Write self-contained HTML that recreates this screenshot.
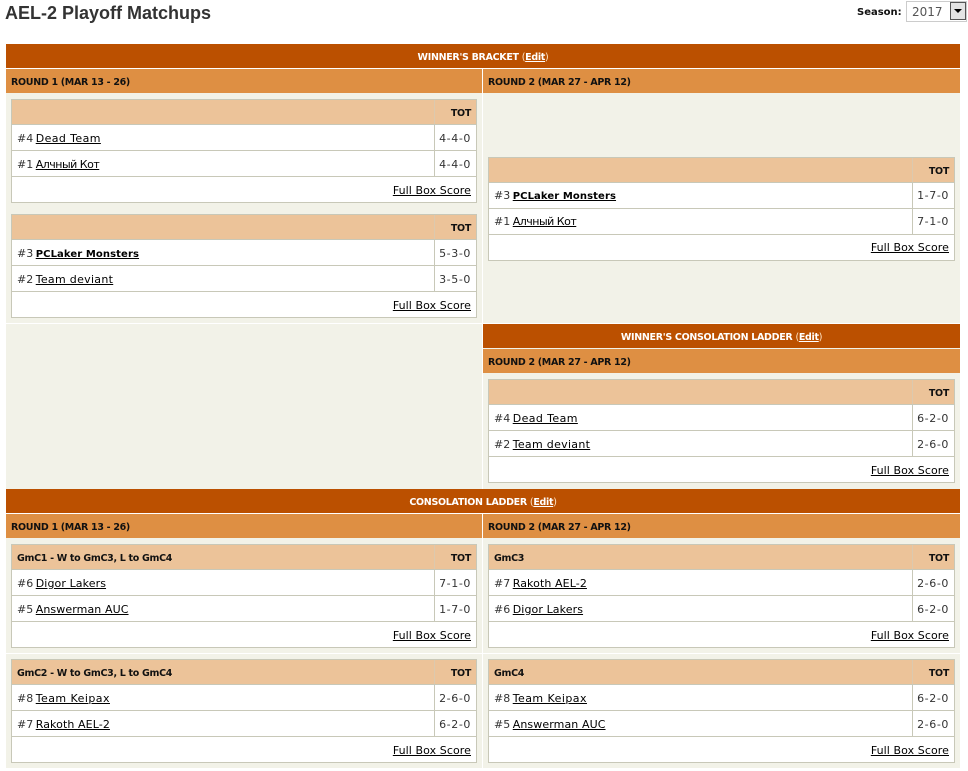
<!DOCTYPE html>
<html><head><meta charset="utf-8">
<style>
html,body{margin:0;padding:0;background:#fff;width:968px;height:771px;overflow:hidden}
body{position:relative;font:11px "DejaVu Sans","Liberation Sans",sans-serif;color:#222}
a{color:#000;text-decoration:underline}
h1{position:absolute;left:5px;top:2px;margin:0;font:bold 18px/22px "Liberation Sans",sans-serif;color:#333}
.s{position:absolute}
.bg{background:#f2f2e8}
.d{position:absolute;height:24px;background:#bb5000;color:#fff;font-weight:bold;font-size:9.5px;letter-spacing:-.3px;line-height:27px;text-align:center}
.d span{font-weight:normal;color:#ffe6c8}
.d a{color:#fff;font-weight:bold}
.o{position:absolute;height:24px;background:#de8f43;color:#111;font-weight:bold;font-size:9.5px;letter-spacing:-.3px;line-height:27px;box-sizing:border-box;padding-left:5px}
.b{position:absolute;width:466px;height:104px;background:#fff;box-sizing:border-box;border:1px solid #c8c8b8}
.w{width:467px}
.b div{position:absolute;left:0;right:0;box-sizing:border-box;white-space:nowrap}
.b .h{top:0;height:25px;background:#ecc399;font-weight:bold;font-size:9.5px;letter-spacing:-.3px;line-height:28px;padding-left:5px;color:#111;border-bottom:1px solid #c8c8b8}
.b .r{height:26px;line-height:28px;padding-left:5px;border-bottom:1px solid #c8c8b8;color:#333}
.b .r1{top:25px}.b .r2{top:51px}
.b .t{left:auto;right:0;top:0;width:42px;height:100%;text-align:right;padding-right:5px;border-left:1px solid #c8c8b8}
.b .r .t{letter-spacing:.6px}
.b .h .t{line-height:28px;border-left:1px solid #dcc9ae}
.b .f{top:77px;height:25px;line-height:28px;text-align:right;padding-right:5px;letter-spacing:.08px}
.r a{margin-left:-1px;letter-spacing:.1px}
.r b a{font-weight:bold;font-size:10px}
.b.u .r,.b.u .f{line-height:26px}
.r a.x1{letter-spacing:.4px}.r a.x2{letter-spacing:-.5px}.r a.x3{letter-spacing:.45px}.r a.x4{letter-spacing:.3px}
</style></head><body>
<h1>AEL-2 Playoff Matchups</h1>
<div class="s" style="left:857px;top:7px;font-weight:bold;font-size:10px;color:#111">Season:</div>
<div class="s" style="left:906px;top:1px;width:61px;height:21px;box-sizing:border-box;border:1px solid #ccc;background:#fff;font-size:12px;line-height:20px;padding-left:5px;color:#555">2017</div>
<div class="s" style="left:950px;top:2px;width:16px;height:18px;box-sizing:border-box;border:1px solid #555;background:#e4e4e4"></div>
<div class="s" style="left:954px;top:9px;width:0;height:0;border:4px solid transparent;border-top:4px solid #000;border-bottom:0"></div>

<div class="s bg" style="left:6px;top:93px;width:954px;height:230px"></div>
<div class="s bg" style="left:6px;top:324px;width:954px;height:165px"></div>
<div class="s bg" style="left:6px;top:538px;width:954px;height:115px"></div>
<div class="s bg" style="left:6px;top:654px;width:954px;height:114px"></div>
<div class="s" style="left:482px;top:69px;width:1px;height:420px;background:#fff"></div>
<div class="s" style="left:482px;top:514px;width:1px;height:254px;background:#fff"></div>

<div class="d" style="left:6px;top:44px;width:954px">WINNER'S BRACKET <span>(<a href="#">Edit</a>)</span></div>
<div class="o" style="left:6px;top:69px;width:476px">ROUND 1 (MAR 13 - 26)</div>
<div class="o" style="left:483px;top:69px;width:477px">ROUND 2 (MAR 27 - APR 12)</div>

<div class="b" style="left:11px;top:99px"><div class="h"><div class="t">TOT</div></div>
<div class="r r1">#4 <a class="x1" href="#">Dead Team</a><div class="t">4-4-0</div></div>
<div class="r r2">#1 <a class="x2" href="#">Алчный Кот</a><div class="t">4-4-0</div></div>
<div class="f"><a href="#">Full Box Score</a></div></div>

<div class="b" style="left:11px;top:214px"><div class="h"><div class="t">TOT</div></div>
<div class="r r1">#3 <b><a href="#">PCLaker Monsters</a></b><div class="t">5-3-0</div></div>
<div class="r r2">#2 <a class="x4" href="#">Team deviant</a><div class="t">3-5-0</div></div>
<div class="f"><a href="#">Full Box Score</a></div></div>

<div class="b w u" style="left:488px;top:157px"><div class="h"><div class="t">TOT</div></div>
<div class="r r1">#3 <b><a href="#">PCLaker Monsters</a></b><div class="t">1-7-0</div></div>
<div class="r r2">#1 <a class="x2" href="#">Алчный Кот</a><div class="t">7-1-0</div></div>
<div class="f"><a href="#">Full Box Score</a></div></div>

<div class="d" style="left:483px;top:324px;width:477px">WINNER'S CONSOLATION LADDER <span>(<a href="#">Edit</a>)</span></div>
<div class="o" style="left:483px;top:349px;width:477px">ROUND 2 (MAR 27 - APR 12)</div>

<div class="b w" style="left:488px;top:379px"><div class="h"><div class="t">TOT</div></div>
<div class="r r1">#4 <a class="x1" href="#">Dead Team</a><div class="t">6-2-0</div></div>
<div class="r r2">#2 <a class="x4" href="#">Team deviant</a><div class="t">2-6-0</div></div>
<div class="f"><a href="#">Full Box Score</a></div></div>

<div class="d" style="left:6px;top:489px;width:954px">CONSOLATION LADDER <span>(<a href="#">Edit</a>)</span></div>
<div class="o" style="left:6px;top:514px;width:476px">ROUND 1 (MAR 13 - 26)</div>
<div class="o" style="left:483px;top:514px;width:477px">ROUND 2 (MAR 27 - APR 12)</div>

<div class="b" style="left:11px;top:544px"><div class="h">GmC1 - W to GmC3, L to GmC4<div class="t">TOT</div></div>
<div class="r r1">#6 <a href="#">Digor Lakers</a><div class="t">7-1-0</div></div>
<div class="r r2">#5 <a href="#">Answerman AUC</a><div class="t">1-7-0</div></div>
<div class="f"><a href="#">Full Box Score</a></div></div>

<div class="b w" style="left:488px;top:544px"><div class="h">GmC3<div class="t">TOT</div></div>
<div class="r r1">#7 <a href="#">Rakoth AEL-2</a><div class="t">2-6-0</div></div>
<div class="r r2">#6 <a href="#">Digor Lakers</a><div class="t">6-2-0</div></div>
<div class="f"><a href="#">Full Box Score</a></div></div>

<div class="b" style="left:11px;top:659px"><div class="h">GmC2 - W to GmC3, L to GmC4<div class="t">TOT</div></div>
<div class="r r1">#8 <a class="x3" href="#">Team Keipax</a><div class="t">2-6-0</div></div>
<div class="r r2">#7 <a href="#">Rakoth AEL-2</a><div class="t">6-2-0</div></div>
<div class="f"><a href="#">Full Box Score</a></div></div>

<div class="b w" style="left:488px;top:659px"><div class="h">GmC4<div class="t">TOT</div></div>
<div class="r r1">#8 <a class="x3" href="#">Team Keipax</a><div class="t">6-2-0</div></div>
<div class="r r2">#5 <a href="#">Answerman AUC</a><div class="t">2-6-0</div></div>
<div class="f"><a href="#">Full Box Score</a></div></div>
</body></html>
